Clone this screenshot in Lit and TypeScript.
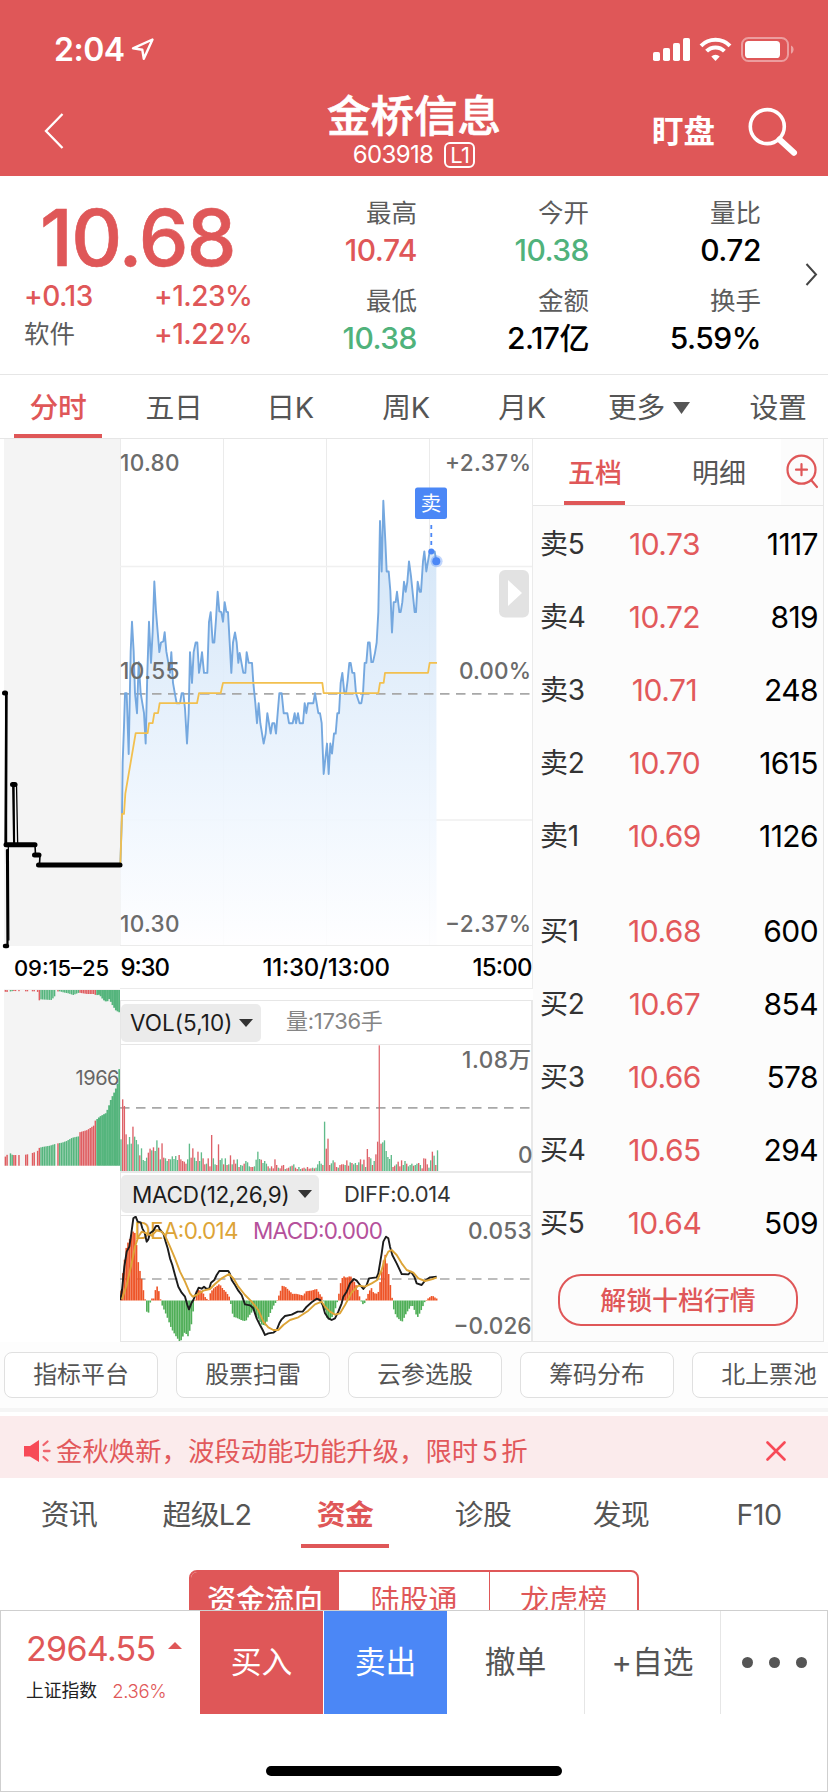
import { LitElement, html, svg, css } from "lit";
import { customElement } from "lit/decorators.js";
import { classMap } from "lit/directives/class-map.js";

type Pt = [number, number];

const parse = (s: string): Pt[] =>
  s.trim().split(/\s+/).map((p) => p.split(",").map(Number) as Pt);

const lerp = (keys: Pt[], x: number): number => {
  if (x <= keys[0][0]) return keys[0][1];
  for (let i = 1; i < keys.length; i++) {
    if (x <= keys[i][0]) {
      const [x0, y0] = keys[i - 1];
      const [x1, y1] = keys[i];
      return y0 + ((y1 - y0) * (x - x0)) / (x1 - x0 || 1);
    }
  }
  return keys[keys.length - 1][1];
};

/* Price panel: x is stored in thirds of a pixel, y in 1/2.8 pixel. */
const PRICE = parse(`361,1218 366,1075 368,930 372,830 375,737 380,737 386,907 392,620 396,537 401,620 405,737 411,793 416,650 422,737 432,793 437,878 442,680 447,537 453,652 458,565 463,424 468,508 473,565 478,622 483,595 490,592 494,566 499,620 505,652 510,680 514,622 519,708 525,740 530,765 540,765 545,737 550,737 555,780 561,878 566,793 570,622 576,708 581,622 587,595 592,595 597,680 602,652 606,622 612,680 622,680 627,537 632,510 638,595 643,595 648,530 653,453 658,508 664,510 669,537 674,482 679,509 684,510 689,595 694,680 699,595 705,567 710,595 715,652 719,624 730,680 736,680 740,622 746,652 756,652 760,708 766,765 771,821 776,765 781,821 791,878 797,850 802,793 812,850 817,821 823,821 828,850 833,793 838,737 845,737 851,793 862,793 867,821 878,821 884,793 888,821 894,793 899,821 909,821 914,765 919,793 924,765 940,765 945,737 955,793 960,793 965,821 971,963 981,878 986,963 991,878 996,906 1002,850 1007,850 1012,793 1017,793 1022,708 1027,680 1033,737 1038,737 1043,700 1048,652 1052,652 1057,680 1063,680 1068,737 1078,765 1084,765 1089,737 1094,652 1099,652 1104,595 1109,595 1114,650 1119,650 1125,624 1130,595 1135,510 1140,255 1145,396 1150,198 1156,311 1160,396 1166,396 1171,450 1176,567 1181,482 1187,482 1191,453 1198,510 1202,510 1207,482 1212,425 1217,453 1222,425 1227,368 1233,410 1244,510 1248,510 1253,425 1259,453 1263,453 1269,368 1273,340 1279,396 1284,368 1289,340 1304,340 1309,368`);
const AVG = parse(`361,1218 366,1075 372,1075 376,1018 407,849 443,849 447,821 458,821 463,793 474,793 479,765 591,765 597,737 662,737 669,708 967,708 971,737 1135,737 1140,708 1151,708 1155,680 1284,680 1289,652 1311,652`);
const px = (p: Pt): string => `${(p[0] / 3).toFixed(2)},${(430 + p[1] / 2.8).toFixed(2)}`;

/* Minute volumes: height plus direction (r up, g down). */
const VOL = `95g 215r 195r 110r 80g 102g 82g 133r 103g 93g 80g 47r 68g 33g 30g 40g 55r 67r 62g 71r 60g 92g 70r 35g 83r 40r 38g 30g 36r 35g 44g 36g 45g 33g 48r 35r 30r 28r 22r 35g 82g 40r 68r 40g 30g 58r 30g 56g 38r 20r 22g 38r 14r 108r 38g 20g 18r 80r 33g 38g 20r 38g 18r 20g 47r 20g 34r 22r 35g 12r 18g 16g 22r 30g 26g 14g 12r 12r 14g 34g 58g 36g 34r 24g 30g 22g 14r 8g 14r 8r 35r 18r 10g 8r 16r 18r 6g 8r 10r 14g 16r 20g 10r 6r 12g 6g 8r 10r 7g 12r 7r 8r 10g 8r 10g 20g 30g 22g 18r 148g 67r 97r 18r 23g 32g 26r 12r 10g 18r 20r 20r 18g 32r 16r 26g 24r 20g 24g 18r 26g 35r 20g 34r 12g 66r 42r 38g 18r 30g 50r 88r 377r 82r 86g 92g 60g 42g 36g 48g 12r 16r 20g 28r 14r 32r 18g 30g 22r 14g 18g 22g 16r 18g 22g 24r 18g 8r 38r 37r 20r 10g 32g 58r 46g 18r 62g`.split(" ").map((s) => ({ h: parseInt(s, 10), up: s.endsWith("r") }));

/* MACD panel, thirds of a pixel; histogram heights are relative to zero. */
const HIST = parse(`361,0 366,60 372,110 380,165 387,180 402,212 407,195 412,145 417,95 422,85 427,55 432,20 437,-3 443,-52 448,-25 453,6 463,6 468,42 473,42 479,20 484,-8 500,-45 515,-85 530,-110 541,-125 548,-110 555,-95 565,-108 575,-70 583,-8 590,28 596,32 607,28 617,8 627,0 632,25 643,38 653,45 659,50 669,35 679,25 689,10 695,-20 700,-50 706,-50 717,-55 727,-60 738,-62 748,-45 760,-30 770,-45 785,-72 797,-75 808,-45 822,-15 832,0 842,28 848,45 858,40 878,20 890,20 910,15 920,28 937,30 950,35 960,20 967,10 972,-5 980,-50 990,-60 1000,-45 1010,-15 1016,10 1022,50 1030,74 1040,68 1052,74 1062,60 1072,40 1080,10 1087,-10 1093,-12 1098,0 1107,25 1115,38 1122,22 1135,20 1142,60 1150,110 1155,145 1162,110 1170,60 1176,20 1180,-20 1190,-48 1207,-65 1220,-38 1237,-12 1245,-30 1253,-52 1262,-35 1275,-5 1285,6 1298,15 1310,6`);
const DIFF = parse(`361,990 366,960 373,890 380,845 388,830 394,790 400,745 407,740 413,755 422,757 427,775 434,788 440,815 445,808 450,790 460,782 468,768 475,768 480,780 490,790 497,815 503,835 510,865 517,885 525,915 535,950 545,968 555,980 562,1005 567,1018 574,1000 580,990 588,970 596,953 605,956 612,950 620,957 628,955 633,938 643,930 650,915 658,903 685,903 690,912 695,930 705,945 715,962 725,975 735,1003 750,1006 760,1015 770,1045 780,1065 788,1080 795,1095 805,1090 820,1088 830,1080 838,1060 845,1048 855,1038 875,1034 893,1025 908,1025 920,1010 935,997 950,986 960,990 968,1005 975,1030 985,1045 995,1050 1005,1045 1015,1025 1025,1000 1030,980 1040,965 1050,940 1062,927 1070,932 1080,945 1090,957 1100,945 1107,925 1130,922 1135,910 1140,880 1145,850 1150,815 1158,800 1165,805 1170,830 1177,855 1190,880 1205,912 1225,913 1233,905 1243,920 1250,940 1265,945 1275,932 1290,922 1310,920`);
const DEA = parse(`366,988 380,945 395,880 405,830 415,800 425,785 440,790 455,797 470,782 485,785 495,797 510,830 525,865 540,905 555,935 570,970 578,980 590,975 610,962 630,957 645,942 665,925 687,912 700,925 715,950 735,975 755,995 775,1020 790,1055 805,1072 820,1080 835,1080 850,1065 870,1050 895,1042 925,1022 945,1003 965,995 975,1010 990,1025 1005,1034 1020,1030 1035,1005 1055,968 1075,947 1095,950 1115,940 1132,930 1145,900 1155,865 1165,845 1175,840 1190,855 1205,880 1220,900 1240,908 1255,925 1275,933 1295,928 1310,923`);
const mp = (p: Pt): string => `${(p[0] / 3).toFixed(2)},${(970 + p[1] / 3).toFixed(2)}`;

/* Call auction: matched volume (bottom) and unmatched volume (top). */
const MATCHED = parse(`14,14 17,30 19,62 22,28 28,40 38,32 60,32 72,32 92,36 108,42 116,46 117,53 126,56 150,60 168,66 186,69 200,74 217,84 236,88 238,100 262,107 284,122 286,135 300,148 318,158 325,175 333,200 345,225 354,250 358,295`);
const UNMATCHED = parse(`14,5 22,6 40,3 70,4 105,4 108,8 115,5 117,32 122,28 155,30 165,18 167,5 180,4 190,7 205,10 220,15 237,8 262,12 285,12 287,16 298,14 310,30 320,36 328,26 334,40 340,50 348,62 360,68`);
const GAPS: Pt[] = [[23, 28], [40, 42], [46, 51], [56, 71], [84, 92], [102, 106], [165, 167]];

const BOOK = {
  sell: [["卖5", "10.73", "1117"], ["卖4", "10.72", "819"], ["卖3", "10.71", "248"], ["卖2", "10.70", "1615"], ["卖1", "10.69", "1126"]],
  buy: [["买1", "10.68", "600"], ["买2", "10.67", "854"], ["买3", "10.66", "578"], ["买4", "10.65", "294"], ["买5", "10.64", "509"]],
};

const base = css`
  :host { display: block; font-family: Inter, "Noto Sans CJK SC", sans-serif; }
  * { box-sizing: border-box; }
  svg { display: block; flex: none; }
  text { font-family: Inter, "Noto Sans CJK SC", sans-serif; }
`;

@customElement("stock-header")
class StockHeader extends LitElement {
  static styles = [base, css`
    :host { height: 176px; background: #df5758; color: #fff; }
    .status { height: 96px; padding: 0 34px 0 54px; display: flex; align-items: center; }
    .time { font-size: 32px; font-weight: 600; line-height: 40px; padding-top: 3px; letter-spacing: -0.5px; }
    .loc { margin-left: 6px; margin-top: 2px; }
    .sys { margin-left: auto; margin-top: 3px; }
    .nav { height: 80px; display: grid; grid-template-columns: 1fr 200px 1fr; }
    .back { margin: 17px 0 0 44px; }
    .mid { display: flex; flex-direction: column; align-items: center; }
    .name { font-size: 43.500px; font-weight: 500; line-height: 44px; margin-top: -2px; -webkit-text-stroke: 0.7px #fff; }
    .code { display: flex; align-items: center; gap: 11px; font-size: 24px; line-height: 30px; letter-spacing: -0.6px; margin-top: 2px; }
    .lv { width: 31px; height: 26px; border: 2px solid #fff; border-radius: 6px; font-size: 22px; line-height: 23px; text-align: center; }
    .right { display: flex; padding: 9px 30px 0 138px; }
    .watch { font-size: 31.500px; font-weight: 700; line-height: 53px; white-space: nowrap; }
    .search { margin-left: auto; }
  `];
  render() {
    return html`
      <div class="status">
        <span class="time">2:04</span>
        <svg class="loc" width="24" height="24" viewBox="0 0 24 24" fill="none" stroke="#fff" stroke-width="2.4" stroke-linejoin="round"><path d="M21.5 2.5 2 11.3l9.3 1.4 1.5 9Z"/></svg>
        <svg class="sys" width="142" height="28" viewBox="652 36 142 28">
          <g fill="#fff">
            <rect x="653" y="52" width="7" height="9" rx="1.8"/><rect x="663" y="48" width="7" height="13" rx="1.8"/>
            <rect x="673" y="43" width="7" height="18" rx="1.8"/><rect x="683" y="38" width="7" height="23" rx="1.8"/>
            <path d="M715.5 61l-4.2-4.6a6.4 6.4 0 0 1 8.4 0Z"/>
          </g>
          <g fill="none" stroke="#fff" stroke-width="4"><path d="M701 45.8a20.5 20.5 0 0 1 29 0"/><path d="M706.6 51.2a12.6 12.6 0 0 1 17.8 0"/></g>
          <rect x="742" y="38" width="46" height="23" rx="6.5" fill="none" stroke="#fff" stroke-opacity=".42" stroke-width="2"/>
          <rect x="745" y="41" width="35" height="17" rx="3.6" fill="#fff"/>
          <path d="M791 45.500c3.400 1.200 3.400 7 0 8.200Z" fill="#fff" fill-opacity=".45"/>
        </svg>
      </div>
      <div class="nav">
        <svg class="back" width="20" height="36" viewBox="0 0 20 36" fill="none" stroke="#fff" stroke-width="2.3"><path d="M18.500 1 2 18l16.500 17"/></svg>
        <div class="mid">
          <div class="name">金桥信息</div>
          <div class="code"><span>603918</span><span class="lv">L1</span></div>
        </div>
        <div class="right">
          <span class="watch">盯盘</span>
          <svg class="search" width="52" height="52" viewBox="746 105 52 52" fill="none" stroke="#fff"><circle cx="767.300" cy="126.600" r="17" stroke-width="3.600"/><path d="M779.500 139.500 794 152.800" stroke-width="6" stroke-linecap="round"/></svg>
        </div>
      </div>`;
  }
}

@customElement("quote-summary")
class QuoteSummary extends LitElement {
  static styles = [base, css`
    :host { height: 199px; border-bottom: 1px solid #e6e6e6; display: flex; background: #fff; }
    .main { width: 290px; padding: 21px 0 0 24px; color: #df5758; flex: none; }
    .price { font-size: 79px; font-weight: 500; line-height: 80px; letter-spacing: -1.6px; padding-left: 16px; -webkit-text-stroke: 0.6px #df5758; }
    .sub { display: grid; grid-template-columns: 130px 1fr; font-size: 28px; line-height: 38px; font-weight: 500; letter-spacing: -0.5px; }
    .sector { color: #5c5c5c; font-size: 25.500px; font-weight: 400; letter-spacing: 0; }
    .stats { display: grid; grid-template-columns: 127px 172px 172px; grid-template-rows: 88px 88px; padding-top: 18px; text-align: right; flex: none; }
    .label { font-size: 25.500px; line-height: 38px; color: #5c5c5c; }
    .value { font-size: 30px; line-height: 36px; font-weight: 500; color: #000; letter-spacing: -0.5px; white-space: nowrap; }
    .up { color: #df5758; }
    .down { color: #50b27b; }
    .more { margin: 87px 0 0 44px; }
  `];
  render() {
    const stats = [["最高", "10.74", "up"], ["今开", "10.38", "down"], ["量比", "0.72", ""], ["最低", "10.38", "down"], ["金额", "2.17亿", ""], ["换手", "5.59%", ""]];
    return html`
      <div class="main">
        <div class="price">10.68</div>
        <div class="sub"><span>+0.13</span><span>+1.23%</span></div>
        <div class="sub"><span class="sector">软件</span><span>+1.22%</span></div>
      </div>
      <div class="stats">
        ${stats.map(([l, v, c]) => html`<div><div class="label">${l}</div><div class="value ${c}">${v}</div></div>`)}
      </div>
      <svg class="more" width="13" height="23" viewBox="0 0 13 23" fill="none" stroke="#444" stroke-width="2"><path d="M1.500 1 11 11.500 1.500 22"/></svg>`;
  }
}

@customElement("period-tabs")
class PeriodTabs extends LitElement {
  static styles = [base, css`
    :host { height: 64px; border-bottom: 1px solid #e6e6e6; display: grid; grid-template-columns: 116px 116px 116px 116px 116px 138px 120px; grid-template-rows: 63px; color: #555; font-size: 28.800px; line-height: 64px; text-align: center; background: #fff; }
    .tab { display: flex; justify-content: center; align-items: center; gap: 8px; white-space: nowrap; letter-spacing: -0.3px; padding-top: 2px; }
    .active { color: #df5758; font-weight: 500; position: relative; }
    .active::after { content: ""; position: absolute; left: 14px; width: 88px; bottom: 0; height: 4px; background: #df5758; }
  `];
  render() {
    const tabs = ["分时", "五日", "日K", "周K", "月K", "更多", "设置"];
    return tabs.map((t, i) => html`<div class=${classMap({ tab: true, active: i === 0 })}>${t}${t === "更多" ? html`<svg width="17" height="12" viewBox="0 0 17 12"><path d="M0 0h17L8.500 12Z" fill="#555"/></svg>` : ""}</div>`);
  }
}

@customElement("chart-column")
class ChartColumn extends LitElement {
  static styles = [base, css`
    :host { width: 533px; flex: none; }
    .axis { fill: #6b6b6b; font-size: 22.500px; font-weight: 500; }
    .time { fill: #000; font-size: 24px; font-weight: 500; }
    .auction-time { font-size: 22px; }
    .lower { display: flex; height: 353px; }
    .right { width: 413px; border: 1px solid #e6e6e6; border-right: 2px solid #e8e8e8; margin-top: 11px; height: 342px; }
    .head { height: 44px; border-bottom: 1px solid #e6e6e6; display: flex; align-items: center; white-space: nowrap; }
    .chip { height: 38px; background: #ebebeb; border-radius: 5px; display: flex; align-items: center; color: #1c1c1c; font-size: 22.500px; }
    .vol { width: 140px; padding-left: 9px; gap: 6px; letter-spacing: 0.05px; }
    .macd { width: 198px; padding-left: 11px; gap: 9px; letter-spacing: -0.25px; }
    .amount { margin-left: 25px; color: #858585; font-size: 22px; letter-spacing: -0.3px; line-height: 30px; margin-top: -3px; }
    .diff { margin-left: 25px; color: #333; font-size: 22px; letter-spacing: -0.35px; }
    .dea { fill: #dda437; font-size: 22.500px; }
    .md { fill: #b5519b; font-size: 22.500px; }
    .head.second { border-top: 2px solid #e8e8e8; height: 45px; }
    .plot { margin-left: -1px; }
  `];

  private price() {
    const line = PRICE.map(px).join(" ");
    const grid = [120.5, 223.5, 326.5, 429.5, 532.5];
    return html`<svg width="533" height="550" viewBox="0 439 533 550">
      <defs><linearGradient id="fill" x1="0" y1="0" x2="0" y2="1"><stop offset="0" stop-color="#cce1f6"/><stop offset=".7" stop-color="#eff6fe"/><stop offset="1" stop-color="#fefeff"/></linearGradient></defs>
      <rect x="4" y="439" width="116" height="507" fill="#f4f4f4"/>
      <g stroke="#ebebeb">
        ${grid.map((x) => svg`<path d=${`M${x} 439V945`}/>`)}
        <path d="M120 566.500H532M120 820H532" stroke="#f0f0f0" stroke-width="1.500"/><path d="M120 945.500H533M120 988.500H533"/>
        <path d="M532.500 945V989"/>
      </g>
      <polygon points=${`${line} 436.6,945 120.5,945`} fill="url(#fill)" fill-opacity=".9"/>
      <path d="M120 693.800H531" stroke="#a8a8a8" stroke-width="1.700" stroke-dasharray="9.500 6.500"/>
      <polyline points=${line} fill="none" stroke="#75a8df" stroke-width="1.900" stroke-linejoin="round"/>
      <polyline points=${AVG.map(px).join(" ")} fill="none" stroke="#f2c04f" stroke-width="1.800" stroke-linejoin="round"/>
      <g class="axis">
        <text x="120" y="470.500" textLength="59.500">10.80</text><text x="120" y="679" textLength="59.500">10.55</text><text x="120" y="932" textLength="59.500">10.30</text>
        <text x="445" y="470.500" textLength="86">+2.37%</text><text x="459" y="679" textLength="72">0.00%</text><text x="445" y="932" textLength="86">−2.37%</text>
      </g>
      <g class="time">
        <text class="auction-time" x="14" y="975.500" textLength="95">09:15–25</text><text x="120.500" y="975.500" textLength="49.500">9:30</text>
        <text x="262.500" y="975.500" textLength="127.500">11:30/13:00</text><text x="472.500" y="975.500" textLength="60">15:00</text>
      </g>
      <g fill="none" stroke="#000" stroke-linejoin="round" stroke-linecap="round">
        <path d="M5.800 694 5 845M7 693 6.200 845M6.500 850 7.300 944M8.300 845 8.800 940M12.700 784 13.700 845M14 784 14.500 845M16.500 784 17.700 845" stroke-width="1.300"/>
        <path d="M6.200 694V845M7.600 850V944" stroke-width="2"/>
        <path d="M4.500 693H5.500M12.500 784.500H15M6 844.800H35M34.500 855H39M38.500 865H120" stroke-width="5"/>
        <path d="M35 845 35.500 855M40 855 39.500 864" stroke-width="1.600"/><path d="M5 946H7" stroke-width="4.500"/>
      </g>
      <path d="M431.300 525V551" stroke="#4b87f6" stroke-width="1.800" stroke-dasharray="4 4"/>
      <rect x="415" y="487.500" width="32" height="31.500" rx="2.500" fill="#4b87f6"/>
      <text x="431" y="511" text-anchor="middle" font-size="20.500" fill="#fff">卖</text>
      <circle cx="436.600" cy="561.300" r="6" fill="#4b87f6" fill-opacity=".35"/><circle cx="436.300" cy="561.300" r="4" fill="#4b87f6"/><circle cx="431.300" cy="551.500" r="3" fill="#4b87f6"/>
      <rect x="499" y="570" width="30" height="47.500" rx="6" fill="#e2e2e2"/><path d="M508 580 522 593 508 606Z" fill="#fff"/>
    </svg>`;
  }

  private auction() {
    const bars = Array.from({ length: 68 }, (_, i) => 14 + i * 5.09);
    const up = (x: number) => x < 27 || (x > 37 && x < 117) || (x > 168 && x < 173) || (x > 237 && x < 285);
    return html`<svg width="120" height="178" viewBox="0 989 120 178">
      <rect x="4" y="989" width="116" height="177" fill="#f4f4f4"/>
      ${bars.map((x) => {
        if (GAPS.some(([a, b]) => x >= a && x < b)) return "";
        const h = lerp(MATCHED, x + 2.5) / 3;
        const t = lerp(UNMATCHED, x + 2.5) / 3;
        const color = up(x) ? "#df5d60" : "#55b57d";
        const w = x > 285 ? 2 : 1.45;
        return svg`<rect x=${x / 3} y=${1165.7 - h} width=${w} height=${h} fill=${color}/><rect x=${x / 3} y="990" width=${w} height=${t} fill=${color}/>`;
      })}
      <text x="75.500" y="1085" textLength="44" font-size="20" fill="#666">1966</text>
    </svg>`;
  }

  private volume() {
    return html`<svg class="plot" width="412" height="126" viewBox="120 1045 412 126">
      <path d="M120 1107.800H531" stroke="#a8a8a8" stroke-width="1.700" stroke-dasharray="9.500 6.500"/>
      ${VOL.map((v, i) => svg`<rect x=${120.3 + i * 1.711} y=${1171 - v.h / 3} width=${i === 151 ? 1.2 : 1.35} height=${v.h / 3} fill=${v.up ? "#de6168" : "#60bb8a"}/>`)}
      <g class="axis"><text x="462" y="1067.800" textLength="69">1.08万</text><text x="518" y="1162.500">0</text></g>
    </svg>`;
  }

  private macd() {
    const bars = Array.from({ length: 185 }, (_, i) => {
      const h = lerp(HIST, 361 + i * 5.15 + 2.5) / 3;
      return svg`<rect x=${120.3 + i * 1.715} y=${h > 0 ? 1300.5 - h : 1300.5} width="1.620" height=${Math.max(0.5, Math.abs(h))} fill=${h > 0 ? "#ee5427" : "#4fae57"}/>`;
    });
    return html`<svg class="plot" width="412" height="125" viewBox="120 1216 412 125">
      <text class="dea" x="134.500" y="1239" textLength="104">DEA:0.014</text><text class="md" x="253" y="1239" textLength="130">MACD:0.000</text>
      <path d="M120 1279H531" stroke="#a8a8a8" stroke-width="1.700" stroke-dasharray="9.500 6.500"/>
      ${bars}
      <polyline points=${DIFF.map(mp).join(" ")} fill="none" stroke="#1c1c1c" stroke-width="1.900" stroke-linejoin="round"/>
      <polyline points=${DEA.map(mp).join(" ")} fill="none" stroke="#dda437" stroke-width="1.900" stroke-linejoin="round"/>
      <g class="axis"><text x="468" y="1239" textLength="63.500">0.053</text><text x="453.500" y="1334" textLength="78">−0.026</text></g>
    </svg>`;
  }

  render() {
    const caret = html`<svg width="14" height="8" viewBox="0 0 14 8"><path d="M0 0h14L7 8Z" fill="#333"/></svg>`;
    return html`
      ${this.price()}
      <div class="lower">
        ${this.auction()}
        <div class="right">
          <div class="head"><div class="chip vol">VOL(5,10)${caret}</div><span class="amount">量:1736手</span></div>
          ${this.volume()}
          <div class="head second"><div class="chip macd">MACD(12,26,9)${caret}</div><span class="diff">DIFF:0.014</span></div>
          ${this.macd()}
        </div>
      </div>`;
  }
}

@customElement("order-book")
class OrderBook extends LitElement {
  static styles = [base, css`
    :host { width: 291px; height: 903px; background: #fcfcfc; border-right: 1px solid #e6e6e6; border-bottom: 1px solid #e6e6e6; }
    .tabs { height: 67px; border-bottom: 1px solid #e6e6e6; display: grid; grid-template-columns: 124px 124px 1fr; grid-template-rows: 66px; text-align: center; font-size: 27px; line-height: 70px; color: #555; }
    .tab { background: #fff; height: 66px; }
    .active { color: #df5758; font-weight: 500; position: relative; }
    .active::after { content: ""; position: absolute; left: 31px; width: 61px; bottom: 0; height: 4px; background: #df5758; }
    .zoom { margin: 14px 0 0 5px; }
    .rows { padding-top: 1px; }
    .buy { padding-top: 22px; }
    .row { height: 73.100px; display: grid; grid-template-columns: 72px 119px 94px; align-items: center; line-height: 40px; }
    .side { padding-left: 7px; font-size: 28px; color: #333; letter-spacing: -0.3px; }
    .price { color: #e2595b; font-size: 30px; letter-spacing: -0.5px; text-align: center; }
    .qty { color: #000; font-size: 30px; letter-spacing: -0.6px; text-align: right; }
    .unlock { width: 240px; height: 52px; border: 2px solid #df5758; border-radius: 23px; margin: 14px 0 0 25px; color: #df5758; font-size: 25.900px; font-weight: 500; line-height: 49px; text-align: center; }
  `];
  render() {
    const row = ([s, p, q]: string[]) => html`<div class="row"><span class="side">${s}</span><span class="price">${p}</span><span class="qty">${q}</span></div>`;
    return html`
      <div class="tabs">
        <div class="tab active">五档</div><div class="tab">明细</div>
        <svg class="zoom" width="34" height="38" viewBox="0 0 34 38" fill="none" stroke="#df5758" stroke-width="2.200" stroke-linecap="round"><circle cx="15.500" cy="16.700" r="14"/><path d="M10 16.700h11M15.500 11.200v11M25.500 27.500 31 34"/></svg>
      </div>
      <div class="rows">${BOOK.sell.map(row)}</div>
      <div class="buy">${BOOK.buy.map(row)}</div>
      <div class="unlock">解锁十档行情</div>`;
  }
}

@customElement("tool-strip")
class ToolStrip extends LitElement {
  static styles = [base, css`
    :host { height: 74px; background: #fff; }
    .strip { height: 66px; padding: 10px 0 0 4px; display: flex; gap: 18px; overflow: hidden; background: #fdfdfd; }
    .tool { flex: none; width: 154px; height: 46px; border: 1px solid #e0e0e0; border-radius: 8px; background: #fff; text-align: center; font-size: 23.900px; line-height: 43px; color: #555; }
    .rule { height: 4px; background: #f5f5f5; }
  `];
  render() {
    return html`<div class="strip">${["指标平台", "股票扫雷", "云参选股", "筹码分布", "北上票池"].map((t) => html`<div class="tool">${t}</div>`)}</div><div class="rule"></div>`;
  }
}

@customElement("promo-banner")
class PromoBanner extends LitElement {
  static styles = [base, css`
    :host { height: 62px; background: #fbebec; display: flex; align-items: center; padding: 8px 42px 0 24px; }
    .text { color: #e2595b; font-size: 26.400px; line-height: 40px; margin-left: 5px; white-space: nowrap; word-spacing: -4px; }
    .close { margin-left: auto; }
  `];
  render() {
    return html`
      <svg width="27" height="24" viewBox="0 0 27 24"><path d="M0 7h6L15 1v22L6 17.500H0Z" fill="#f74a57"/><g stroke="#f0646d" stroke-width="2.300" stroke-linecap="round"><path d="M19.500 6 23.500 2.500M20 12h5.500M19.500 18l4 3.500"/></g></svg>
      <span class="text">金秋焕新，波段动能功能升级，限时 5 折</span>
      <svg class="close" width="20" height="20" viewBox="0 0 20 20" stroke="#f74a57" stroke-width="2.600" stroke-linecap="round"><path d="M1.500 1.500l17 17M18.500 1.500l-17 17"/></svg>`;
  }
}

@customElement("info-section")
class InfoSection extends LitElement {
  static styles = [base, css`
    :host { height: 132px; overflow: hidden; background: #fff; }
    .tabs { height: 70px; display: grid; grid-template-columns: repeat(6, 1fr); grid-template-rows: 70px; text-align: center; color: #555; font-size: 28.800px; line-height: 74px; letter-spacing: -0.6px; }
    .active { color: #df5758; font-weight: 600; position: relative; }
    .active::after { content: ""; position: absolute; left: 25px; width: 88px; bottom: 0; height: 4px; background: #df5758; }
    .segment { width: 450px; height: 60px; margin: 22px auto 0; border: 2px solid #df5758; border-radius: 8px; display: grid; grid-template-columns: 148px 151px 1fr; font-size: 29px; line-height: 57px; text-align: center; color: #df5758; overflow: hidden; }
    .on { background: #df5758; color: #fff; font-weight: 500; }
    .mid { border-right: 1px solid #df5758; }
  `];
  render() {
    return html`
      <div class="tabs">${["资讯", "超级L2", "资金", "诊股", "发现", "F10"].map((t, i) => html`<div class=${classMap({ active: i === 2 })}>${t}</div>`)}</div>
      <div class="segment"><div class="on">资金流向</div><div class="mid">陆股通</div><div>龙虎榜</div></div>`;
  }
}

@customElement("trade-bar")
class TradeBar extends LitElement {
  static styles = [base, css`
    :host { height: 182px; border: 1px solid #cfcfcf; background: #fff; }
    .bar { height: 103px; display: grid; grid-template-columns: 199px 123px 1px 123px 138px 136px 1fr; text-align: center; font-size: 30.800px; line-height: 102px; color: #555; }
    .index { padding: 17px 0 0 25px; text-align: left; }
    .value { display: flex; gap: 13px; align-items: center; font-size: 34px; line-height: 42px; letter-spacing: -0.7px; color: #df5758; }
    .arrow { margin-top: -8px; }
    .meta { display: flex; gap: 15px; font-size: 17.800px; line-height: 30px; margin-top: 6px; color: #222; }
    .pct { color: #df5758; font-weight: 300; letter-spacing: -0.3px; font-size: 18.500px; }
    .buy { background: #df5758; color: #fff; }
    .sell { background: #4b87f6; color: #fff; }
    .cell { border-right: 1px solid #e6e6e6; }
    .dots { display: flex; align-items: center; justify-content: center; gap: 16px; }
    .dot { width: 11px; height: 11px; border-radius: 50%; background: #555; }
    .home { width: 296px; height: 10px; border-radius: 5px; background: #000; margin: 52px auto 0; }
  `];
  render() {
    return html`
      <div class="bar">
        <div class="index">
          <div class="value">2964.55<svg class="arrow" width="14" height="7" viewBox="0 0 14 7"><path d="M0 7 7 0l7 7Z" fill="#df5758"/></svg></div>
          <div class="meta"><span>上证指数</span><span class="pct">2.36%</span></div>
        </div>
        <div class="buy">买入</div><div></div><div class="sell">卖出</div>
        <div class="cell">撤单</div><div class="cell">+自选</div>
        <div class="dots"><i class="dot"></i><i class="dot"></i><i class="dot"></i></div>
      </div>
      <div class="home"></div>`;
  }
}

@customElement("app-root")
class AppRoot extends LitElement {
  static styles = [base, css`
    :host { width: 828px; height: 1792px; overflow: hidden; background: #fff; }
    .market { display: flex; height: 903px; }
  `];
  render() {
    return html`
      <stock-header></stock-header>
      <quote-summary></quote-summary>
      <period-tabs></period-tabs>
      <div class="market"><chart-column></chart-column><order-book></order-book></div>
      <tool-strip></tool-strip>
      <promo-banner></promo-banner>
      <info-section></info-section>
      <trade-bar></trade-bar>`;
  }
}
